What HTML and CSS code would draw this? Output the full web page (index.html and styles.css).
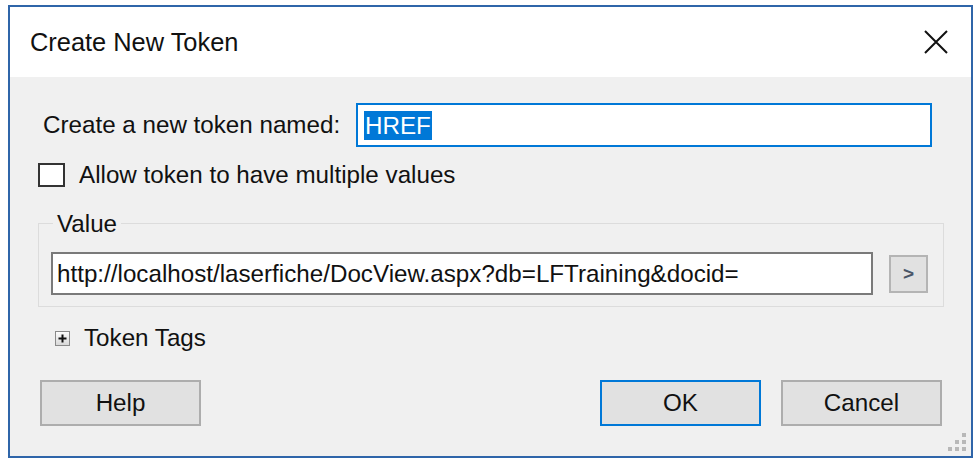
FILE: index.html
```html
<!DOCTYPE html>
<html>
    <head>
        <meta charset='UTF-8'>
        <link rel="stylesheet" href="styles.css">
    </head>
    <body>
        <div class="window">
            <div class="titlebar">
                <span class="title">Create New Token</span>
                <svg class="close" width="26" height="26" viewBox="0 0 26 26">
                    <path d="M2 2 L24 24 M24 2 L2 24" stroke="#111" stroke-width="2" fill="none"/>
                </svg>
            </div>
            <div class="content">
                <div class="row name-row">
                    <label class="name-label">Create a new token named:</label>
                    <div class="name-input"><span class="selected">HREF</span></div>
                </div>
                <div class="row check-row">
                    <span class="checkbox"></span>
                    <span>Allow token to have multiple values</span>
                </div>
                <fieldset class="group">
                    <legend>Value</legend>
                    <div class="value-row">
                        <div class="value-input">http://localhost/laserfiche/DocView.aspx?db=LFTraining&amp;docid=</div>
                        <div class="arrow-btn">&gt;</div>
                    </div>
                </fieldset>
                <div class="row tags-row">
                    <span class="plus-box">
                        <svg width="11" height="11" viewBox="0 0 11 11">
                            <path d="M1.5 5.5 H9.5 M5.5 1.5 V9.5" stroke="#111" stroke-width="2"/>
                        </svg>
                    </span>
                    <span>Token Tags</span>
                </div>
                <div class="row buttons">
                    <div class="btn help">Help</div>
                    <div class="spacer"></div>
                    <div class="btn default">OK</div>
                    <div class="btn">Cancel</div>
                </div>
                <div class="grip">
                    <i></i>
                    <i></i><i></i>
                    <i></i><i></i><i></i>
                </div>
            </div>
        </div>
    </body>
</html>
```

FILE: styles.css
```css
html, body {
    margin: 0;
    padding: 0;
    background: #fff;
}

body {
    font-family: 'Liberation Sans', Arial, sans-serif;
    font-size: 24.2px;
    color: #111;
}

.window {
    margin: 5px 0 0 8px;
    width: 961px;
    height: 449px;
    border: 2px solid #2f65a9;
    display: flex;
    flex-direction: column;
}

.titlebar {
    height: 70px;
    background: #fff;
    display: flex;
    align-items: center;
    justify-content: space-between;
    padding: 0 22px 0 20px;
    flex-shrink: 0;
}

.title {
    font-size: 25.4px;
    color: #111;
}

.content {
    position: relative;
    flex: 1;
    background: #f0f0f0;
    padding-top: 26px;
}

.row {
    display: flex;
    align-items: center;
}

.name-row {
    height: 44px;
}

.name-label {
    width: 346px;
    padding-left: 33px;
    box-sizing: border-box;
}

.name-input {
    width: 576px;
    height: 44px;
    box-sizing: border-box;
    border: 2px solid #0078d7;
    background: #fff;
    display: flex;
    align-items: center;
    padding-left: 6px;
}

.selected {
    background: #0078d7;
    color: #fff;
    line-height: 29px;
    padding: 0 1px;
}

.check-row {
    margin-top: 15px;
    height: 25px;
    padding-left: 28px;
    gap: 14px;
}

.checkbox {
    width: 27px;
    height: 24px;
    box-sizing: border-box;
    border: 2px solid #333;
    background: #fff;
}

.group {
    margin: 23px 0 0 28px;
    width: 906px;
    box-sizing: border-box;
    border: 1px solid #dcdcdc;
    padding: 15px 12px 11px 12px;
    min-inline-size: 0;
}

.group legend {
    padding: 0 4px;
    margin-left: 2px;
    line-height: 27px;
}

.value-row {
    display: flex;
    align-items: center;
}

.value-input {
    width: 822px;
    height: 43px;
    box-sizing: border-box;
    border: 2px solid #7a7a7a;
    background: #fff;
    display: flex;
    align-items: center;
    padding-left: 4px;
    white-space: nowrap;
}

.arrow-btn {
    margin-left: 16px;
    width: 39px;
    height: 38px;
    box-sizing: border-box;
    border: 2px solid #b4b4b4;
    background: #e1e1e1;
    display: flex;
    align-items: center;
    justify-content: center;
    font-size: 19px;
    font-weight: bold;
    color: #4a5668;
}

.tags-row {
    margin-top: 18px;
    height: 26px;
    padding-left: 45px;
    gap: 14px;
}

.plus-box {
    width: 15px;
    height: 15px;
    box-sizing: border-box;
    border: 1px solid #8a8a8a;
    background: linear-gradient(#fdfdfd, #d8d8d8);
    display: flex;
    align-items: center;
    justify-content: center;
}

.buttons {
    margin-top: 29px;
    padding: 0 29px 0 30px;
    gap: 20px;
}

.spacer {
    flex: 1;
}

.btn {
    width: 161px;
    height: 46px;
    box-sizing: border-box;
    border: 2px solid #adadad;
    background: #e1e1e1;
    display: flex;
    align-items: center;
    justify-content: center;
}

.btn.default {
    border-color: #0078d7;
}

.grip {
    position: absolute;
    right: 5px;
    bottom: 5px;
    width: 18px;
    display: flex;
    flex-wrap: wrap;
    justify-content: flex-end;
    gap: 3px;
}

.grip i {
    width: 4px;
    height: 4px;
    background: #b8b8b8;
}

.grip i:nth-child(1) {
    margin-left: 14px;
}

.grip i:nth-child(2) {
    margin-left: 7px;
}
```
